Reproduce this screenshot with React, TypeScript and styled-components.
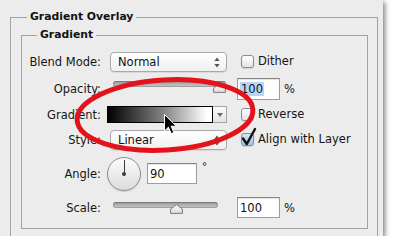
import { FC, ReactNode } from "react";
import styled, { createGlobalStyle } from "styled-components";

const GlobalStyle = createGlobalStyle`
  body {
    margin: 0;
    background: #ffffff;
    font-family: "DejaVu Sans", "Liberation Sans", sans-serif;
    color: #161616;
  }
`;

const UpDownArrows: FC = () => (
  <svg width="6" height="11" viewBox="0 0 6 11">
    <path d="M3 0.5 L5.6 4 L0.4 4 Z" fill="#555" />
    <path d="M3 10.5 L5.6 7 L0.4 7 Z" fill="#555" />
  </svg>
);

const DownArrow: FC = () => (
  <svg width="6" height="4" viewBox="0 0 6 4">
    <path d="M0 0 L6 0 L3 4 Z" fill="#6a6a6a" />
  </svg>
);

const CheckMark: FC = () => (
  <svg width="18" height="20" viewBox="0 0 18 20">
    <path
      d="M3 11.5 L6.8 17 L15 2"
      fill="none"
      stroke="#111"
      strokeWidth="2.4"
      strokeLinecap="round"
      strokeLinejoin="round"
    />
  </svg>
);

const ThumbShape: FC = () => (
  <svg width="13" height="10" viewBox="0 0 13 10">
    <defs>
      <linearGradient id="thumbFill" x1="0" y1="0" x2="0" y2="1">
        <stop offset="0" stopColor="#ffffff" />
        <stop offset="1" stopColor="#d9d9d9" />
      </linearGradient>
    </defs>
    <path
      d="M6.5 0.6 L12.4 5 L12.4 9.4 L0.6 9.4 L0.6 5 Z"
      fill="url(#thumbFill)"
      stroke="#7a7a7a"
      strokeWidth="1"
      strokeLinejoin="round"
    />
  </svg>
);

const Annotation: FC = () => (
  <Overlay width="383" height="236" viewBox="0 0 383 236">
    <ellipse
      cx="165"
      cy="115"
      rx="88"
      ry="35"
      fill="none"
      stroke="#e2131b"
      strokeWidth="5"
      transform="rotate(-3.5 165 115)"
    />
    <path
      d="M164.5 114.5 L164.5 131 L168.4 127.2 L171.2 133.6 L173.8 132.5 L171.1 126.2 L176.4 126.2 Z"
      fill="#000"
      stroke="#fff"
      strokeWidth="1"
      strokeLinejoin="round"
    />
  </Overlay>
);

interface ISlider {
  top: number;
  width: number;
  value: number;
}

const Slider: FC<ISlider> = ({ top, width, value }) => (
  <SliderBox $top={top} $width={width}>
    <Track />
    <Thumb style={{ left: `${value * (width - 13)}px` }}>
      <ThumbShape />
    </Thumb>
  </SliderBox>
);

interface ICheck {
  label: string;
  checked?: boolean;
}

const Check: FC<ICheck> = ({ label, checked }) => (
  <CheckRow>
    <Box $checked={checked}>
      {checked && (
        <Mark>
          <CheckMark />
        </Mark>
      )}
    </Box>
    <span>{label}</span>
  </CheckRow>
);

const Select: FC<{ children: ReactNode }> = ({ children }) => (
  <SelectBox>
    <span>{children}</span>
    <UpDownArrows />
  </SelectBox>
);

const App: FC = () => (
  <>
    <GlobalStyle />
    <Panel>
      <Group $open>
        <Legend $inset={16}>Gradient Overlay</Legend>
        <OuterBody>
          <Group>
            <Legend $inset={15}>Gradient</Legend>
            <Rows>
              <Label>Blend Mode:</Label>
              <Select>Normal</Select>
              <Check label="Dither" />

              <Label>Opacity:</Label>
              <Slider top={3} width={113} value={1} />
              <Inline>
                <Field $width={43} $height={22}>
                  <Selected>100</Selected>
                </Field>
                <Unit>%</Unit>
              </Inline>

              <Label>Gradient:</Label>
              <Swatch>
                <Ramp />
                <SwatchButton>
                  <DownArrow />
                </SwatchButton>
              </Swatch>
              <Check label="Reverse" />

              <Label>Style:</Label>
              <Select>Linear</Select>
              <Check label="Align with Layer" checked />

              <Label>Angle:</Label>
              <Inline>
                <Dial>
                  <Needle />
                  <Hub />
                </Dial>
                <Field $width={50} $height={21}>
                  90
                </Field>
                <Degree>°</Degree>
              </Inline>
              <span />

              <Label>Scale:</Label>
              <Slider top={5} width={105} value={0.62} />
              <Inline>
                <Field $width={43} $height={21}>
                  100
                </Field>
                <Unit>%</Unit>
              </Inline>
            </Rows>
          </Group>
        </OuterBody>
      </Group>
      <Annotation />
    </Panel>
  </>
);

export default App;

const Panel = styled.div`
  position: relative;
  width: 383px;
  height: 236px;
  box-sizing: border-box;
  padding: 10px 5px 0 10px;
  background: #ececec;
  box-shadow: 2px 2px 5px rgba(0, 0, 0, 0.5);
  overflow: hidden;
  font-size: 11.5px;
`;

const Overlay = styled.svg`
  position: absolute;
  left: 0;
  top: 0;
  pointer-events: none;
`;

const Group = styled.fieldset<{ $open?: boolean }>`
  margin: 0;
  padding: 0;
  min-width: 0;
  box-sizing: border-box;
  border: 1px solid #a2a2a2;
  border-bottom: ${(props) => (props.$open ? "none" : "1px solid #a2a2a2")};
`;

const Legend = styled.legend<{ $inset: number }>`
  margin-left: ${(props) => props.$inset}px;
  padding: 0 3px;
  font-size: 10.8px;
  line-height: 14px;
  font-weight: 700;
  color: #111;
`;

const OuterBody = styled.div`
  padding: 4px 9px 20px 10px;
`;

const Rows = styled.div`
  display: grid;
  grid-template-columns: 79px 118px 1fr;
  grid-template-rows: 20px 22px 18px 20px 35px 21px;
  column-gap: 9px;
  row-gap: 6px;
  padding: 10px 0 10px 0;
`;

const Label = styled.div`
  align-self: center;
  text-align: right;
  white-space: nowrap;
`;

const SelectBox = styled.div`
  width: 117px;
  height: 20px;
  box-sizing: border-box;
  display: flex;
  align-items: center;
  justify-content: space-between;
  padding: 0 6px 0 7px;
  border: 1px solid #a9a9a9;
  border-radius: 4px;
  background: linear-gradient(#ffffff, #f0f0f0);
  box-shadow: 0 1px 1px rgba(0, 0, 0, 0.08);
  color: #111;
`;

const CheckRow = styled.div`
  display: flex;
  align-items: center;
  gap: 4px;
  margin-left: 4px;
  margin-bottom: 2px;
  white-space: nowrap;
`;

const Box = styled.div<{ $checked?: boolean }>`
  position: relative;
  width: 13px;
  height: 13px;
  box-sizing: border-box;
  border: 1px solid #8c8c8c;
  border-radius: 3px;
  background: ${(props) =>
    props.$checked
      ? "linear-gradient(#d6e6f8, #9cc1ea)"
      : "linear-gradient(#ffffff, #e4e4e4)"};
  box-shadow: 0 1px 1px rgba(0, 0, 0, 0.12);
`;

const Mark = styled.div`
  position: absolute;
  left: -2px;
  top: -7px;
  line-height: 0;
`;

const SliderBox = styled.div<{ $top: number; $width: number }>`
  position: relative;
  align-self: start;
  margin-top: ${(props) => props.$top}px;
  margin-left: 3px;
  width: ${(props) => props.$width}px;
  height: 14px;
`;

const Track = styled.div`
  height: 6px;
  border-radius: 3px;
  background: linear-gradient(#8f8f8f, #b9b9b9 60%, #c6c6c6);
  box-shadow: inset 0 0 0 1px rgba(0, 0, 0, 0.18);
`;

const Thumb = styled.div`
  position: absolute;
  top: 2px;
  line-height: 0;
`;

const Inline = styled.div`
  display: flex;
  align-items: center;
  gap: 3px;
`;

const Field = styled.div<{ $width: number; $height: number }>`
  width: ${(props) => props.$width}px;
  height: ${(props) => props.$height}px;
  box-sizing: border-box;
  display: flex;
  align-items: center;
  padding-left: 2px;
  border: 1px solid #9d9d9d;
  border-top-color: #858585;
  background: #ffffff;
  box-shadow: inset 0 1px 1px rgba(0, 0, 0, 0.12);
  color: #111;
`;

const Selected = styled.span`
  background: #b4d4fb;
  padding: 0 1px;
`;

const Unit = styled.span`
  margin-left: 1px;
`;

const Degree = styled.span`
  margin-left: 2px;
  align-self: flex-start;
  margin-top: 5px;
  font-size: 10px;
`;

const Swatch = styled.div`
  display: flex;
  height: 17px;
  margin-left: -3px;
  width: 120px;
`;

const Ramp = styled.div`
  flex: 1;
  border: 1px solid #000;
  background: linear-gradient(to right, #000000, #888888 55%, #ffffff 95%);
`;

const SwatchButton = styled.div`
  width: 14px;
  display: flex;
  align-items: center;
  justify-content: center;
  box-sizing: border-box;
  border: 1px solid #a6a6a6;
  border-left: none;
  background: linear-gradient(#fbfbfb, #e3e3e3);
`;

const Dial = styled.div`
  position: relative;
  width: 34px;
  height: 34px;
  margin-left: -3px;
  margin-right: 3px;
  box-sizing: border-box;
  border: 1px solid #8d8d8d;
  border-radius: 50%;
  background: linear-gradient(#fbfbfb, #dcdcdc);
  box-shadow: 0 1px 1px rgba(0, 0, 0, 0.12);
`;

const Needle = styled.div`
  position: absolute;
  left: 16px;
  top: 2px;
  width: 1px;
  height: 14px;
  background: #3a3a3a;
`;

const Hub = styled.div`
  position: absolute;
  left: 14px;
  top: 14px;
  width: 4px;
  height: 4px;
  border-radius: 50%;
  background: #3a3a3a;
`;
